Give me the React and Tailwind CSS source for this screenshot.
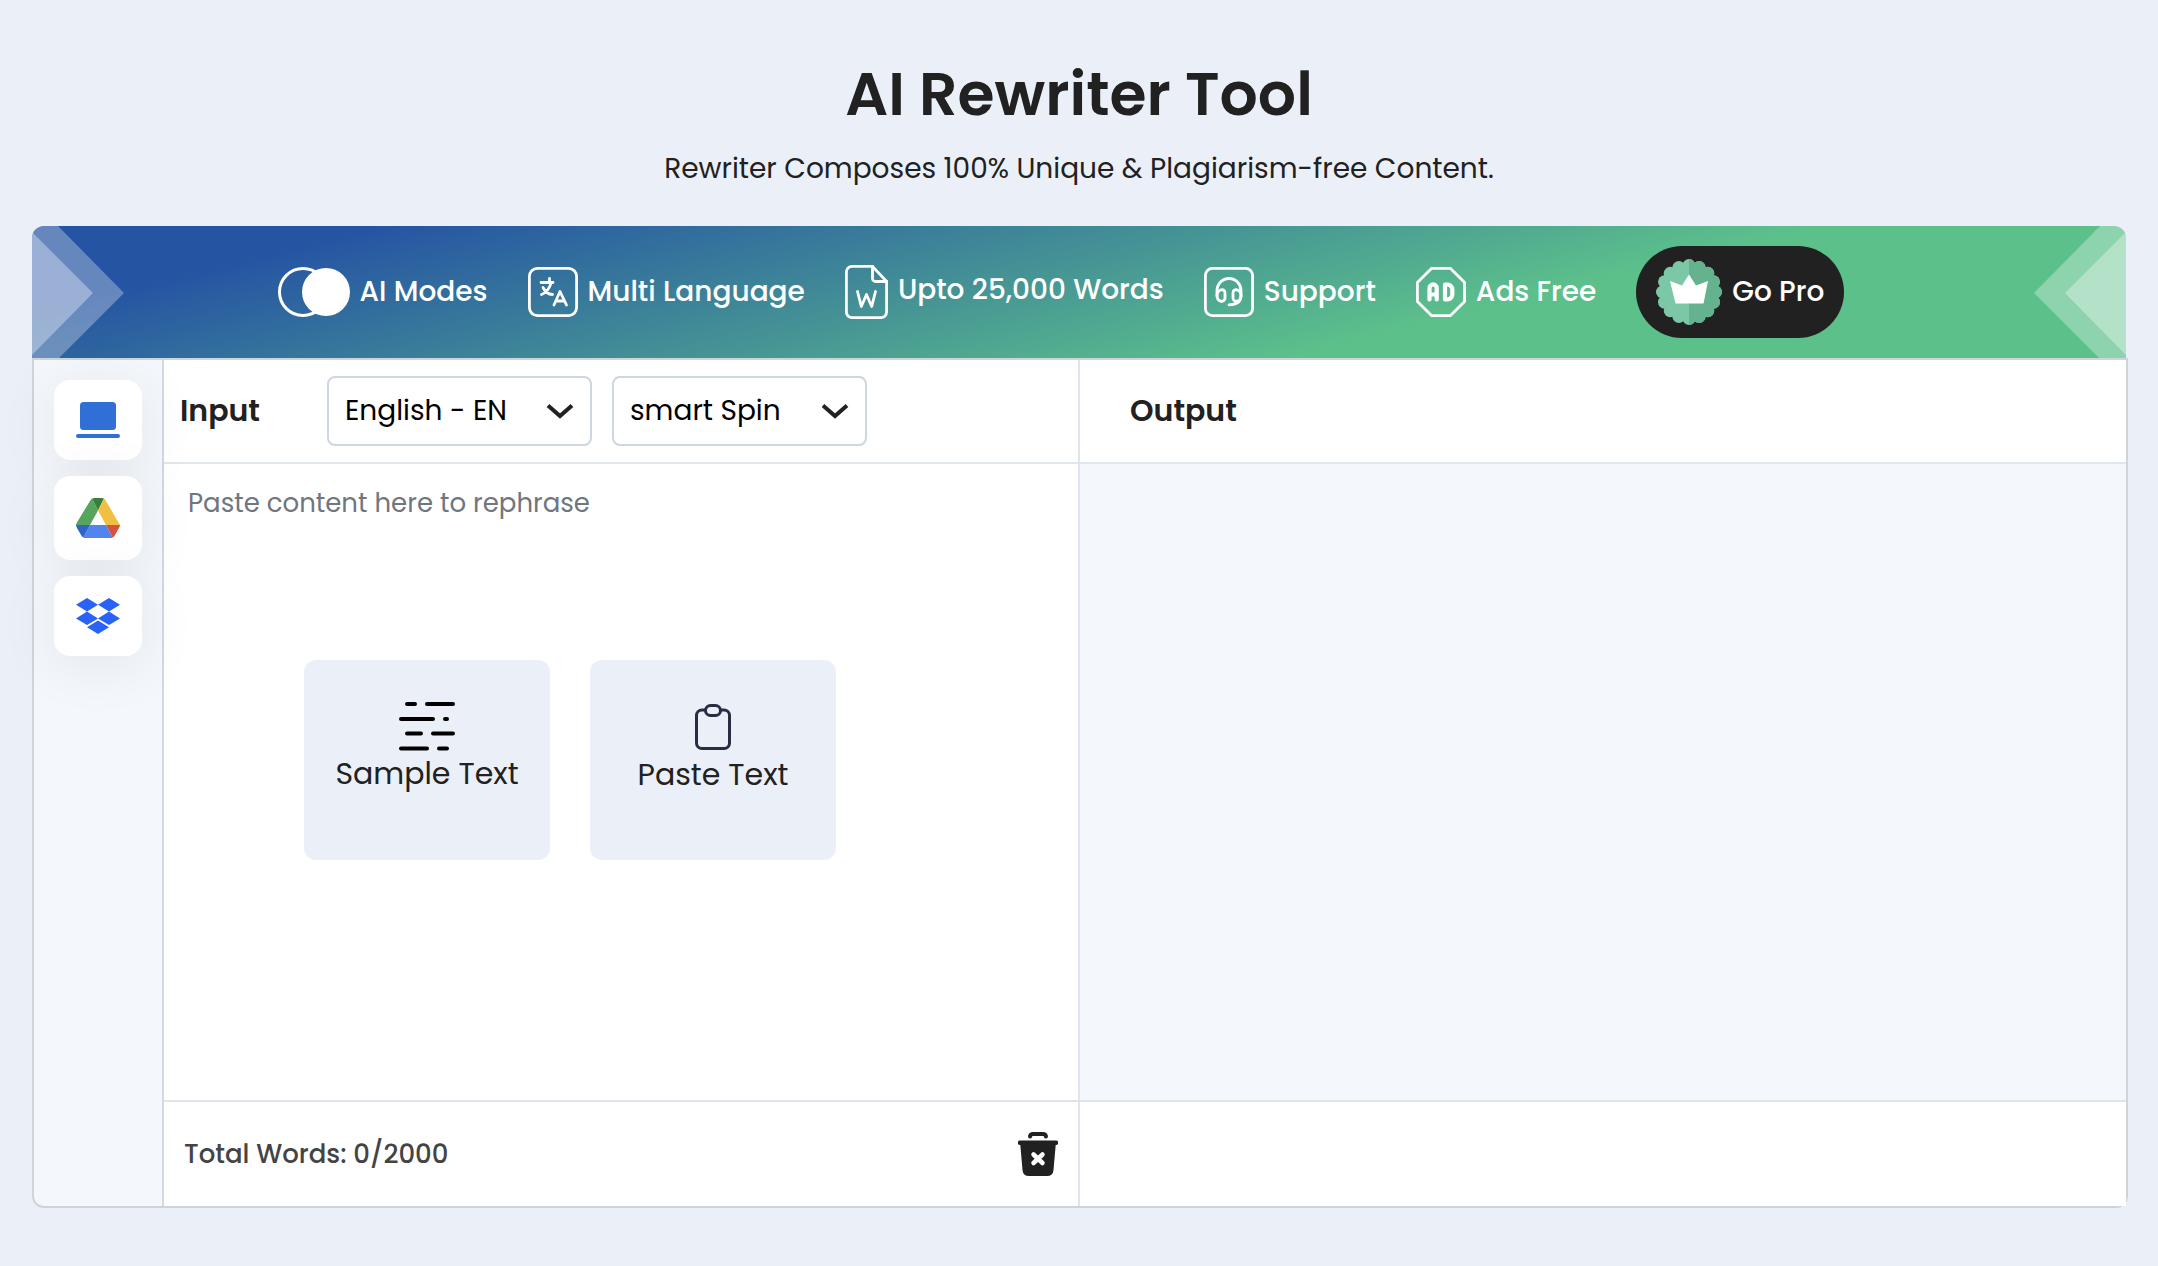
import clsx from 'clsx';

const ToggleIcon = () => (
  <svg viewBox="0 0 72 50" className="h-[50px] w-[72px] shrink-0" fill="none">
    <circle cx="25" cy="25" r="23.5" stroke="#fff" strokeWidth="3" />
    <circle cx="48" cy="25" r="24" fill="#fff" />
  </svg>
);

const LanguageIcon = () => (
  <svg viewBox="0 0 50 50" className="size-[50px] shrink-0" fill="none" stroke="#fff" strokeWidth="2.8" strokeLinecap="round" strokeLinejoin="round">
    <rect x="1.4" y="1.4" width="47.2" height="47.2" rx="8" />
    <path d="M13 15.5h12M21.5 11.5v4M23 16c-1.5 6-5 9.5-9.5 11.500M15 20.5c2 4 5.5 7 9.5 7" />
    <path d="M26 38l6-13.5L38.500 38M28.300 34h8" />
  </svg>
);

const WordIcon = () => (
  <svg viewBox="0 0 43 54" className="h-[54px] w-[43px] shrink-0" fill="none" stroke="#fff" strokeWidth="2.8" strokeLinecap="round" strokeLinejoin="round">
    <path d="M27.500 1.4H7a5.6 5.6 0 0 0-5.600 5.600v40a5.600 5.600 0 0 0 5.600 5.600h29a5.600 5.600 0 0 0 5.600-5.600V16.500z" />
    <path d="M27.500 1.400v12.100a3 3 0 0 0 3 3h11.100" />
    <path d="M12.500 26.500l3.800 15 5.200-12 5.200 12 3.800-15" />
  </svg>
);

const SupportIcon = () => (
  <svg viewBox="0 0 50 50" className="size-[50px] shrink-0" fill="none" stroke="#fff" strokeWidth="2.8" strokeLinecap="round" strokeLinejoin="round">
    <rect x="1.4" y="1.4" width="47.2" height="47.2" rx="7" />
    <path d="M13 29v-5.500a12 12 0 0 1 24 0V29c0 5-3.500 8.500-12 8.800" />
    <path d="M13 28.500c0-6 8-8 8-2.500v5c0 5-8 4.500-8-2.500z" />
    <path d="M37 28.500c0-6-8-8-8-2.500v5c0 5 8 4.500 8-2.500z" />
  </svg>
);

const AdsIcon = () => (
  <svg viewBox="0 0 50 50" className="size-[50px] shrink-0" fill="none" stroke="#fff" strokeWidth="2.8" strokeLinejoin="round">
    <path d="M15.500 1.400h19L48.600 15.500v19L34.500 48.600h-19L1.400 34.500v-19z" />
    <g strokeWidth="4.200" strokeLinecap="round">
      <path d="M13.500 32.500V21a3.600 3.600 0 0 1 7.200 0v11.500M13.500 27.500h7.200" />
      <path d="M29 17.500h2.500a4.800 4.800 0 0 1 4.800 4.800v5.400a4.800 4.800 0 0 1-4.800 4.800H29z" />
    </g>
  </svg>
);

const scallops = Array.from({ length: 16 }, (_, i) => {
  const a = (i * Math.PI) / 8;
  return { cx: 33 + 26.5 * Math.cos(a), cy: 33 + 26.5 * Math.sin(a) };
});

const CrownBadge = () => (
  <svg viewBox="0 0 66 66" className="size-[66px] shrink-0">
    <defs>
      <clipPath id="badgeHalf">
        <rect x="33" y="0" width="33" height="66" />
      </clipPath>
    </defs>
    <g fill="#7cc8a6">
      <circle cx="33" cy="33" r="29" />
      {scallops.map((s, i) => (
        <circle key={i} cx={s.cx} cy={s.cy} r="6.5" />
      ))}
    </g>
    <g fill="#65b28f" clipPath="url(#badgeHalf)">
      <circle cx="33" cy="33" r="29" />
      {scallops.map((s, i) => (
        <circle key={i} cx={s.cx} cy={s.cy} r="6.5" />
      ))}
    </g>
    <path fill="#fff" d="M14 22l12 4.500 7-11 7 11L52 22l-4.500 22.500h-28z" />
  </svg>
);

const LaptopIcon = () => (
  <svg viewBox="0 0 44 36" className="h-9 w-11" fill="#3070d6">
    <rect x="4" y="0" width="36" height="28" rx="3.5" />
    <rect x="0" y="32" width="44" height="4" rx="2" />
  </svg>
);

const DriveIcon = () => (
  <svg viewBox="0 0 44 40" className="h-10 w-11">
    <path fill="#56a55c" d="M16 0.600Q15 1.200 14 3L1.500 23.500Q0 26 0 27h14L22 12.500z" />
    <path fill="#3a7e3f" d="M16 0.600Q17 0 18.500 0h7q1.500 0 2.500.600L22 12.500z" />
    <path fill="#f1bf42" d="M28 .600q1 .700 2 2.400l12.500 21.500Q44 26 44 27H30L22 12.500z" />
    <path fill="#d8513d" d="M30 27h14q0 1-1 3l-4 7q-1 2-2.500 2.500z" />
    <path fill="#5383ec" d="M14 27h16l6.500 12.500q-1 .500-2.500.500H10q-1.500 0-2.500-.500z" />
    <path fill="#2f64c8" d="M0 27h14L7.500 39.500Q6.300 39 5 37L1 30q-1-2-1-3z" />
  </svg>
);

const DropboxIcon = () => (
  <svg viewBox="0 0 44 36" className="h-9 w-11" fill="#2962f6">
    <path d="M11 0l11 6.800-11 6.800L0 6.800zM33 0l11 6.800-11 6.800-11-6.800zM11 13.600l11 6.800-11 6.700L0 20.400zM33 13.600l11 6.800-11 6.700-11-6.700zM22 22.500l11 6.800L22 36l-11-6.700z" />
  </svg>
);

const SampleIcon = () => (
  <svg viewBox="0 0 56 49" className="h-[49px] w-14" stroke="#000" strokeWidth="4" strokeLinecap="round">
    <path d="M8 2h8M28 2h26M2 17h32M46 17h2M8 31.500h14M34 31.500h20M2 46.500h26M40 46.500h8" />
  </svg>
);

const PasteIcon = () => (
  <svg viewBox="0 0 36 46" className="my-0.5 h-[46px] w-9" fill="none" stroke="#292c42" strokeWidth="3">
    <path d="M10.500 6H7a5.500 5.500 0 0 0-5.500 5.500V39A5.500 5.500 0 0 0 7 44.500h22a5.500 5.500 0 0 0 5.500-5.500V11.500A5.500 5.500 0 0 0 29 6h-3.500" />
    <rect x="10.500" y="1.500" width="15" height="10" rx="5" />
  </svg>
);

const TrashIcon = () => (
  <svg viewBox="0 0 40 44" className="h-11 w-10">
    <path fill="none" stroke="#212121" strokeWidth="4" strokeLinecap="round" d="M12 4.500Q12.500 2 15 2h10q2.500 0 3 2.500" />
    <path fill="#212121" d="M2 8.500h36a2 2 0 0 1 0 4.500h-.300L35.500 38q-.500 6-6.500 6H11q-6 0-6.500-6L2.300 13H2a2 2 0 0 1 0-4.500z" />
    <path stroke="#fff" strokeWidth="4.500" strokeLinecap="round" d="M15.500 22.500l9 8.500M24.500 22.500l-9 8.500" />
  </svg>
);

const Chevron = () => (
  <svg viewBox="0 0 28 16" className="pointer-events-none col-start-1 row-start-1 mr-[18px] h-4 w-7 justify-self-end" fill="none" stroke="#222" strokeWidth="4">
    <path d="M2 2.500L14 13 26 2.500" />
  </svg>
);

const BannerArrow = ({ flip }) => (
  <svg viewBox="0 0 94 132" className={clsx('absolute top-0 h-[132px] w-[94px]', flip ? 'right-0 -scale-x-100' : 'left-0')} fill="#fff">
    <path fillOpacity="0.3" d="M0 0h26l66 67-65 65H0z" />
    <path fillOpacity="0.34" d="M0 6l61 61L0 129z" />
  </svg>
);

const FEATURES = [
  { label: 'AI Modes', icon: ToggleIcon },
  { label: 'Multi Language', icon: LanguageIcon },
  { label: 'Upto 25,000 Words', icon: WordIcon, raised: true },
  { label: 'Support', icon: SupportIcon },
  { label: 'Ads Free', icon: AdsIcon },
];

const UPLOADS = [
  { label: 'Upload from computer', icon: LaptopIcon, height: 'h-20' },
  { label: 'Upload from Google Drive', icon: DriveIcon, height: 'h-[84px]' },
  { label: 'Upload from Dropbox', icon: DropboxIcon, height: 'h-20' },
];

const Banner = () => (
  <div className="relative mr-0.5 flex h-[132px] items-center justify-center gap-10 overflow-hidden rounded-t-xl bg-[linear-gradient(166deg,#2554a3_13%,#5cc08b_68%)] pr-9 text-white">
    <BannerArrow />
    {FEATURES.map(({ label, icon: Icon, raised }) => (
      <div key={label} className="flex items-center gap-2.5 text-[28px] leading-10 font-medium whitespace-nowrap">
        <Icon />
        <span className={clsx(raised && 'pb-1')}>{label}</span>
      </div>
    ))}
    <button type="button" className="flex h-[92px] items-center gap-2.5 rounded-full bg-[#212121] px-5 text-[28px] font-medium whitespace-nowrap">
      <CrownBadge />
      Go Pro
    </button>
    <BannerArrow flip />
  </div>
);

const Dropdown = ({ label, options, className }) => (
  <div className={clsx('grid items-center', className)}>
    <select aria-label={label} className="col-start-1 row-start-1 h-[70px] w-full appearance-none rounded-lg border-2 border-[#cdd6e3] bg-white pl-4 text-[28px] text-black">
      {options.map((o) => (
        <option key={o}>{o}</option>
      ))}
    </select>
    <Chevron />
  </div>
);

const ActionCard = ({ icon: Icon, label }) => (
  <button type="button" className="flex h-[200px] w-[246px] flex-col items-center rounded-xl bg-[#ebf0f8] pt-[42px] text-[30px] leading-[46px] text-[#212121]">
    <Icon />
    {label}
  </button>
);

const App = () => {
  return (
    <div className="min-h-screen bg-[#ebf0f8] px-[30px] pt-[60px] pb-[58px] font-['Poppins','Inter',sans-serif] text-[#212121]">
      <header className="text-center">
        <h1 className="text-[60px] leading-[68px] font-semibold">AI Rewriter Tool</h1>
        <p className="pt-5 pb-9 text-[28px] leading-[42px]">Rewriter Composes 100% Unique &amp; Plagiarism-free Content.</p>
      </header>

      <main className="ml-0.5">
        <Banner />

        <div className="flex rounded-b-xl border-2 border-[#d0d3d7] bg-[#f4f7fc]">
          <aside className="relative z-10 flex w-[130px] shrink-0 flex-col items-center gap-4 border-r-2 border-[#d1d9e2] pt-5">
            {UPLOADS.map(({ label, icon: Icon, height }) => (
              <button key={label} type="button" aria-label={label} className={clsx('flex w-[88px] items-center justify-center rounded-2xl bg-white shadow-[0_8px_60px_rgba(0,0,0,0.08)]', height)}>
                <Icon />
              </button>
            ))}
          </aside>

          <section className="flex w-[916px] shrink-0 flex-col border-r-2 border-[#dfe4ec] bg-white">
            <div className="flex h-[104px] items-center border-b-2 border-[#dfe6ec] pl-4">
              <h2 className="w-[147px] pb-0.5 text-[30px] font-semibold">Input</h2>
              <div className="flex gap-5">
                <Dropdown label="Language" options={['English - EN']} className="w-[265px]" />
                <Dropdown label="Mode" options={['smart Spin']} className="w-[255px]" />
              </div>
            </div>
            <div className="grid h-[636px]">
              <textarea
                aria-label="Text to rephrase"
                placeholder="Paste content here to rephrase"
                className="col-start-1 row-start-1 resize-none px-6 pt-5 text-[26px] leading-[39px] outline-none placeholder:text-[#6f767e]"
              />
              <div className="col-start-1 row-start-1 mt-[196px] flex gap-10 self-start justify-self-center pr-[102px]">
                <ActionCard icon={SampleIcon} label="Sample Text" />
                <ActionCard icon={PasteIcon} label="Paste Text" />
              </div>
            </div>
            <div className="flex h-[106px] items-center justify-between border-t-2 border-[#dfe4ec] px-5">
              <span className="text-[26px] font-medium text-[#444]">Total Words: 0/2000</span>
              <button type="button" aria-label="Clear text">
                <TrashIcon />
              </button>
            </div>
          </section>

          <section className="flex min-w-0 flex-1 flex-col">
            <div className="flex h-[104px] items-center border-b-2 border-[#dfe6ec] bg-white pl-[50px]">
              <h2 className="pb-0.5 text-[30px] font-semibold">Output</h2>
            </div>
            <div className="flex-1" />
            <div className="h-[106px] border-t-2 border-[#dfe4ec] bg-white" />
          </section>
        </div>
      </main>
    </div>
  );
};

export default App;
